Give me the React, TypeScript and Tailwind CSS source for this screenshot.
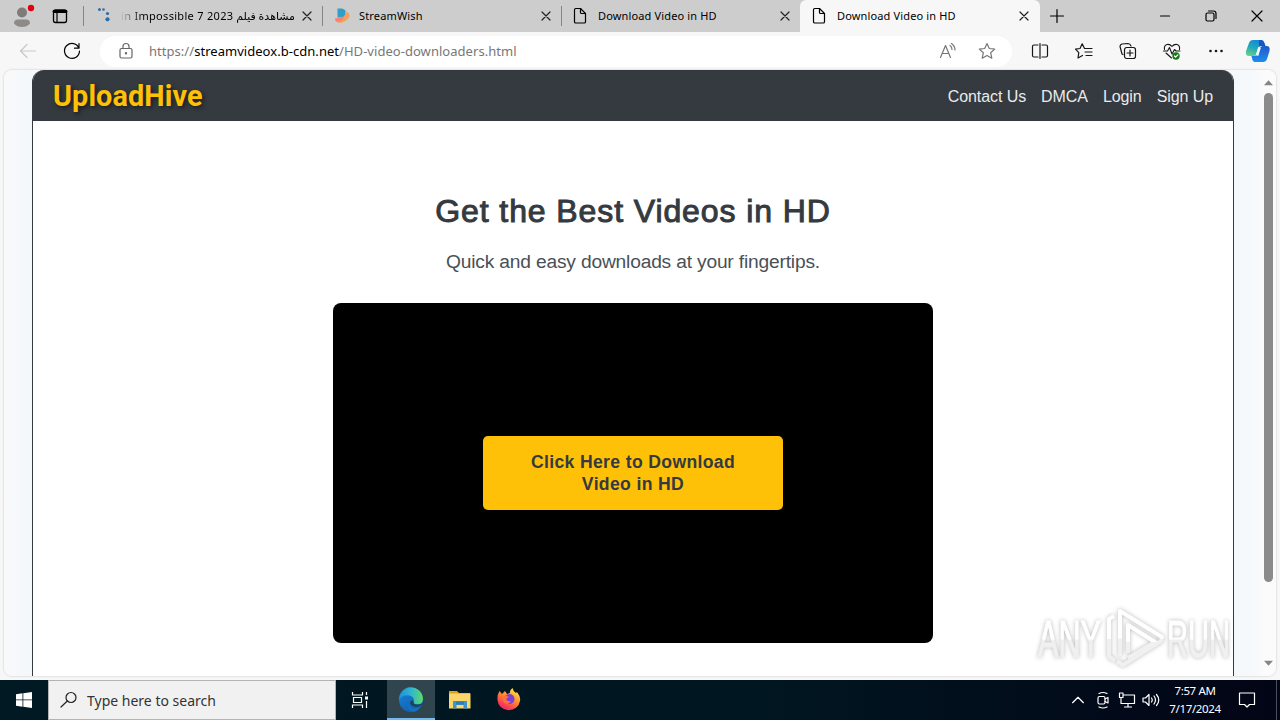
import type { ReactNode } from "react";

interface IconProps {
  children: ReactNode;
  className?: string;
  size?: number;
}

function Icon({ children, className = "", size = 20 }: IconProps) {
  return (
    <svg
      className={`shrink-0 ${className}`}
      width={size}
      height={size}
      viewBox="0 0 20 20"
      fill="none"
      stroke="currentColor"
      strokeWidth="1.2"
      strokeLinecap="round"
      strokeLinejoin="round"
    >
      {children}
    </svg>
  );
}

function PageIcon() {
  return (
    <Icon className="-ml-px text-black">
      <path d="M4.5 3.8A1.3 1.3 0 0 1 5.8 2.5H10.500L15.500 7.500V15.700A1.300 1.300 0 0 1 14.200 17H5.800A1.300 1.300 0 0 1 4.500 15.700Z" />
      <path d="M10.500 2.500V6.500A1 1 0 0 0 11.500 7.500H15.500" />
    </Icon>
  );
}

function DotsIcon() {
  return (
    <svg className="ml-0.5" width="20" height="20" viewBox="0 0 20 20" fill="#2d6ea8">
      <circle cx="4.500" cy="3.500" r="1.500" />
      <circle cx="8.500" cy="3.500" r="1.300" />
      <circle cx="12.500" cy="7.500" r="1.600" />
      <circle cx="12.500" cy="13.300" r="2.100" />
    </svg>
  );
}

function StreamIcon() {
  return (
    <svg width="20" height="20" viewBox="0 0 20 20">
      <path d="M5.500 2.500H10Q14 3.500 14.500 7L11 12L5.500 11Z" fill="#2f9fc6" />
      <path d="M13 5Q18.500 7 17.500 11Q14 16 8 17Q3 16 3 13Q9 14 13 9Z" fill="#f5a05f" />
      <path d="M3 12.500Q8 10 12 11Q11 15 6 16Q3 15 3 12.500Z" fill="#f48378" />
    </svg>
  );
}

interface TabProps {
  icon: ReactNode;
  title: string;
  active?: boolean;
  rtl?: boolean;
  last?: boolean;
}

function Tab({ icon, title, active, rtl, last }: TabProps) {
  return (
    <div
      className={`flex h-8 shrink-0 items-center ${
        active ? "-ml-px w-[240px] rounded-t-md bg-[#f7f7f7] pl-[10px]" : "w-[239px] pl-[9px]"
      }`}
    >
      <span className="flex w-[27px] shrink-0">{icon}</span>
      <span
        dir={rtl ? "rtl" : "ltr"}
        className={`w-[175px] overflow-hidden whitespace-nowrap text-start text-[11px] leading-5 text-black ${
          rtl ? "[mask-image:linear-gradient(to_right,transparent,black_22px)]" : "tracking-[0.15px]"
        }`}
      >
        {rtl ? <span className="tracking-[0.3px]">{title}</span> : title}
      </span>
      <Icon size={16} className="ml-1 text-[#222]">
        <path d="M5 5L15 15M15 5L5 15" strokeWidth="1.500" />
      </Icon>
      {!active && !last && <span className="ml-[7px] h-5 w-px bg-[#858585]" />}
    </div>
  );
}

function TabStrip() {
  return (
    <div className="flex h-8 items-center bg-[#cdcdcd]">
      <div className="flex w-[84px] items-center">
        <svg className="ml-[10px]" width="26" height="28" viewBox="0 0 26 28">
          <circle cx="12" cy="10.500" r="5" fill="#7e7b79" />
          <path d="M4 21.500Q4 17.500 8 17.500H16Q20 17.500 20 21.500Q17 25 12 25T4 21.500Z" fill="#8d8a88" />
          <circle cx="21" cy="6" r="3.200" fill="#e3000f" />
        </svg>
        <Icon className="ml-[14px] text-black">
          <rect x="3.500" y="4" width="13" height="12.500" rx="2" strokeWidth="1.300" />
          <path d="M4 5.500H16" strokeWidth="2.800" />
          <path d="M7 7V16" />
        </Icon>
        <span className="ml-[13px] h-5 w-px bg-[#858585]" />
      </div>
      <Tab icon={<DotsIcon />} title="مشاهدة فيلم in Impossible 7 2023" rtl />
      <Tab icon={<StreamIcon />} title="StreamWish" />
      <Tab icon={<PageIcon />} title="Download Video in HD" last />
      <Tab icon={<PageIcon />} title="Download Video in HD" active />
      <Icon className="ml-[7px] text-black">
        <path d="M10 3.500V16.500M3.500 10H16.500" />
      </Icon>
      <div className="ml-auto flex text-black">
        <span className="flex w-[46px] justify-center">
          <Icon><path d="M5.500 10H14.500" /></Icon>
        </span>
        <span className="flex w-[46px] justify-center">
          <Icon>
            <rect x="5" y="7" width="8" height="8" rx="1.500" />
            <path d="M7.500 5H12.500A2.500 2.500 0 0 1 15 7.500V12.500" />
          </Icon>
        </span>
        <span className="flex w-[46px] justify-center">
          <Icon><path d="M5 5L15 15M15 5L5 15" /></Icon>
        </span>
      </div>
    </div>
  );
}

function CopilotIcon() {
  return (
    <svg width="26" height="26" viewBox="0 0 26 26">
      <defs>
        <linearGradient id="cpa" x1="0.6" y1="0" x2="0.2" y2="1">
          <stop offset="0" stopColor="#1587dc" />
          <stop offset="0.500" stopColor="#22a9b8" />
          <stop offset="1" stopColor="#6bd08a" />
        </linearGradient>
        <linearGradient id="cpb" x1="0" y1="0" x2="0" y2="1">
          <stop offset="0" stopColor="#2456c8" />
          <stop offset="1" stopColor="#1a8ff0" />
        </linearGradient>
      </defs>
      <path d="M8 2H16Q18 2 19 5L20 8H17Q14 8 13 11L11 17Q10 18 8 18H4Q0 18 1 13L4 5Q5 2 8 2Z" fill="url(#cpa)" />
      <path d="M14 2H16.500Q18.500 2 19.500 5L20.500 8H17L14 8Z" fill="#1755c4" />
      <path d="M18 8H21.500Q25.500 8 24.500 13L22 21Q21 24 18 24H10Q7.500 24 7 20L6.500 18H9Q12 18 13 15L15 10Q16 8 18 8Z" fill="url(#cpb)" />
      <path d="M14.500 9.500L12 17.500" stroke="#f3fafd" strokeWidth="2.600" />
    </svg>
  );
}

function Toolbar() {
  return (
    <div className="flex h-[38px] items-center bg-[#f7f7f7]">
      <Icon className="ml-[18px] text-[#c9c9c9]">
        <path d="M17.500 10H2.500M9 3.500L2.500 10L9 16.500" />
      </Icon>
      <Icon className="ml-[24px] text-black">
        <path d="M17 7.200A7.500 7.500 0 1 0 17.500 10M17 2.500V7.200H12.500" strokeWidth="1.200" />
      </Icon>
      <div className="ml-[18px] flex h-[31px] w-[912px] items-center rounded-full bg-white pl-4">
        <Icon className="text-[#666]">
          <rect x="4" y="7.500" width="12" height="9.500" rx="1.500" />
          <path d="M7 7.500V5.500A3 3 0 0 1 13 5.500V7.500" />
          <circle cx="10" cy="12.200" r="0.600" fill="currentColor" />
        </Icon>
        <span className="mt-px ml-[13px] whitespace-nowrap text-[13px] tracking-[0.04px] text-[#777]">
          https://<span className="text-black">streamvideox.b-cdn.net</span>/HD-video-downloaders.html
        </span>
        <Icon className="mr-[19px] ml-auto text-[#777]">
          <path d="M2.500 16.500L7.500 4.500L12.500 16.500M4.300 12.500H10.800" />
          <path d="M12 4.500Q14 6 14 8.500M13.500 2.500Q17 5 17 9" />
        </Icon>
        <Icon className="mr-[15px] text-[#777]">
          <path d="M10 2.500L12.300 7.500L17.700 8.100L13.700 11.800L14.800 17.200L10 14.500L5.200 17.200L6.300 11.800L2.300 8.100L7.700 7.500Z" />
        </Icon>
      </div>
      <div className="ml-[18px] flex items-center gap-6 text-[#161616]">
        <Icon>
          <path d="M8 4H4A1.500 1.500 0 0 0 2.500 5.500V14.500A1.500 1.500 0 0 0 4 16H8M12 4H16A1.500 1.500 0 0 1 17.500 5.500V14.500A1.500 1.500 0 0 1 16 16H12M10 2.500V17.500" />
        </Icon>
        <Icon>
          <path d="M12 7.500H10.500L8.200 2.800L6 7.500L1.500 8.200L4.800 11.600L4 17L8.500 14.500M12.500 7.500H18M11 11H18M12 14.500H18" />
        </Icon>
        <Icon>
          <path d="M5 13.500L4 13L2 5.500Q2 3.500 4 3L10 2.500Q12 2.500 13 5" />
          <rect x="6.500" y="6.500" width="11" height="11" rx="2.200" />
          <path d="M12 9V15M9 12H15" />
        </Icon>
        <Icon>
          <path d="M2.500 8.500Q1.800 4.500 5 3.500Q8 3 10 5.500Q12 3 15 3.500Q18.200 4.500 17.500 8.500M1.500 10H5.500L7.500 6.500L10 13L12.500 8.500L14 10H18M4 12L9.500 17" strokeWidth="1.100" />
          <circle cx="14" cy="15" r="3.700" fill="#187818" stroke="none" />
          <path d="M12.500 15L13.600 16.200L15.800 13.800" stroke="white" />
        </Icon>
        <Icon>
          <g fill="currentColor" stroke="none">
            <circle cx="4.500" cy="10" r="1.300" />
            <circle cx="10" cy="10" r="1.300" />
            <circle cx="15.500" cy="10" r="1.300" />
          </g>
        </Icon>
      </div>
      <div className="ml-[19px]">
        <CopilotIcon />
      </div>
    </div>
  );
}

const navLinks = ["Contact Us", "DMCA", "Login", "Sign Up"];

function SiteHeader() {
  return (
    <header className="flex h-[51px] items-center justify-between bg-[#343a40] px-5">
      <div className="pt-0.5 font-[Roboto,sans-serif] text-[28.800px] font-bold tracking-[0.1px] text-[#ffc107] [text-shadow:2px_2px_4px_rgba(0,0,0,0.5)]">
        UploadHive
      </div>
      <nav className="flex gap-[15px] pt-0.5 text-base tracking-[-0.08px] text-[#e9eaeb]">
        {navLinks.map((link) => (
          <a key={link}>{link}</a>
        ))}
      </nav>
    </header>
  );
}

function Watermark() {
  return (
    <svg
      className="absolute right-0 bottom-1 drop-shadow-[0_0_2px_rgba(0,0,0,0.28)]"
      width="200"
      height="66"
      viewBox="0 0 200 66"
    >
      <defs>
        <linearGradient id="wm" x1="0" y1="0" x2="0" y2="1">
          <stop offset="0.500" stopColor="#ffffff" />
          <stop offset="0.520" stopColor="#f0f0f0" />
        </linearGradient>
      </defs>
      <g
        fill="url(#wm)"
        stroke="url(#wm)"
        strokeWidth="1.2"
        fontFamily="Liberation Sans, sans-serif"
        fontSize="52"
      >
        <text x="5" y="51" textLength="63" lengthAdjust="spacingAndGlyphs">ANY</text>
        <text x="134" y="51" textLength="63" lengthAdjust="spacingAndGlyphs">RUN</text>
      </g>
      <g fill="none" stroke="url(#wm)" strokeWidth="4" strokeLinejoin="round">
        <path d="M81 10L76 13V50L82 55" />
        <path d="M87 50V5L129 31L128 35L90 59L84 55" />
        <path d="M95 47V19L122 36L95 52" />
      </g>
    </svg>
  );
}

function Site() {
  return (
    <div className="flex h-[610px] bg-[#f7f7f7] px-1 pb-1">
      <div className="flex min-w-0 flex-1 overflow-hidden rounded-lg bg-[#f6fafd] shadow-[0_0_2px_rgba(0,0,0,0.25)]">
        <div className="h-full w-7 shrink-0 bg-linear-to-r from-[#f9f9f9] to-[#f3f8fc]" />
        <div className="relative w-[1202px] shrink-0 overflow-hidden rounded-t-[12px] border-x border-[#343a40] bg-white font-['Liberation_Sans',Arial,sans-serif]">
          <SiteHeader />
          <main className="flex flex-col items-center pt-[70px] text-[#343a40]">
            <h1 className="text-[32px] leading-10 tracking-[0.9px] [-webkit-text-stroke:1px_#343a40]">
              Get the Best Videos in HD
            </h1>
            <p className="mt-[19px] text-[19.200px] leading-6 tracking-[-0.18px] text-[#495057]">
              Quick and easy downloads at your fingertips.
            </p>
            <div className="mt-[29px] flex h-[340px] w-[600px] items-center justify-center rounded-lg bg-black">
              <button className="h-[74px] w-[300px] rounded-[5px] bg-[#ffc107] px-10 text-[17.600px] leading-[22px] font-bold tracking-[0.35px]">
                Click Here to Download Video in HD
              </button>
            </div>
          </main>
          <Watermark />
        </div>
        <div className="flex-1 bg-linear-to-r from-[#f3f8fc] to-[#f8fafb]" />
        <div className="flex w-[15px] flex-col items-center bg-[#fbfbfb] pt-[10px] pb-[10px]">
          <svg width="9" height="6" viewBox="0 0 10 6"><path d="M5 0L10 5.500H0Z" fill="#858585" /></svg>
          <div className="mt-[7px] h-[489px] w-[9px] rounded-full bg-[#8b8b8b]" />
          <svg className="mt-auto" width="9" height="6" viewBox="0 0 10 6"><path d="M0 0.500H10L5 6Z" fill="#858585" /></svg>
        </div>
      </div>
    </div>
  );
}

function EdgeIcon() {
  return (
    <svg width="26" height="26" viewBox="0 0 26 26">
      <defs>
        <linearGradient id="edga" x1="0" y1="0.500" x2="1" y2="0.500">
          <stop offset="0" stopColor="#1d8fdc" />
          <stop offset="0.500" stopColor="#2fb6d0" />
          <stop offset="1" stopColor="#5fd968" />
        </linearGradient>
        <linearGradient id="edgb" x1="0" y1="0" x2="0.600" y2="1">
          <stop offset="0" stopColor="#1b84d6" />
          <stop offset="1" stopColor="#0f62b4" />
        </linearGradient>
      </defs>
      <circle cx="13" cy="13" r="12" fill="url(#edgb)" />
      <path d="M1 13A12 12 0 0 1 25 11.500Q25 17.500 19 17.500Q14.500 17.500 15.500 15Q17 10 11.500 8.500Q5 7 1 13Z" fill="url(#edga)" />
      <path d="M9.500 14Q9 20 14.500 21.500Q19.500 22.500 23 19Q20 24 15.500 24.800Q8 22 9.500 14Z" fill="#1673c4" />
      <path d="M15.500 13.500Q12 13 12 15.500Q12.500 19.500 18 20Q22 20 26 16.500V15Q24.500 17.500 19 17.500Q15 17.500 15.500 13.500Z" fill="#1f4459" />
    </svg>
  );
}

function ExplorerIcon() {
  return (
    <svg width="24" height="24" viewBox="0 0 24 24">
      <path d="M1 3H9L11 5H22V10H1Z" fill="#e2a01c" />
      <path d="M1 5.500H22.500V20.500H1Z" fill="#fbd76b" />
      <path d="M5 20.500V13H19V20.500H15.500V17H8.500V20.500Z" fill="#3e94cc" />
      <path d="M8 13.500H16V16.500H8Z" fill="#2b7eb6" />
    </svg>
  );
}

function FirefoxIcon() {
  return (
    <svg width="26" height="26" viewBox="0 0 26 26">
      <defs>
        <linearGradient id="ffx" x1="0.8" y1="0" x2="0.2" y2="1">
          <stop offset="0" stopColor="#fff04a" />
          <stop offset="0.450" stopColor="#ff8a2c" />
          <stop offset="0.850" stopColor="#f5315d" />
        </linearGradient>
      </defs>
      <path d="M3.500 4L6 7L9 4L11 7L14 6Q13 4 16.500 1Q17 4 20 6L21 5Q25 10 24 14A11.300 10.500 0 0 1 1.500 13Q1 8 3.500 4Z" fill="url(#ffx)" />
      <circle cx="13.500" cy="12" r="5" fill="#7c40d2" />
      <path d="M7 10Q10 8 13 10L10 12Q11 15 15 14Q13 18 9 16Q6 14 7 10Z" fill="#ff7040" />
    </svg>
  );
}

function Taskbar() {
  return (
    <div className="flex h-10 items-center bg-linear-to-r from-[#001923] via-[#001620] via-60% to-[#020516] text-white">
      <div className="flex w-12 justify-center">
        <svg width="16" height="16" viewBox="0 0 16 16" fill="white">
          <path d="M0 2.200L6.500 1.300V7.500H0ZM7.300 1.200L16 0V7.500H7.300ZM0 8.300H6.500V14.700L0 13.800ZM7.300 8.300H16V16L7.300 14.800Z" />
        </svg>
      </div>
      <div className="flex h-10 w-72 items-center border border-[#b4b4b4] bg-[#f1f1f1] text-[#333]">
        <Icon className="ml-[10px] text-[#222]">
          <circle cx="12" cy="7.500" r="5" />
          <path d="M8.300 11L2 17" />
        </Icon>
        <span className="ml-2 text-[14px]">Type here to search</span>
      </div>
      <div className="flex w-[51px] justify-center pr-[3px]">
        <svg width="18" height="18" viewBox="0 0 18 18" fill="none" stroke="white" strokeWidth="1.200">
          <path d="M1.500 1V4H11.500V1M1.500 17V14H11.500V17M2.500 6.500H10.500V11.500H2.500ZM15.500 1V4M15.500 10V17" />
          <path d="M14 5.500H17V8.500H14Z" fill="white" stroke="none" />
        </svg>
      </div>
      <div className="flex h-10 w-12 items-center justify-center border-b-2 border-[#76b9ed] bg-[#30454e] pt-0.5">
        <EdgeIcon />
      </div>
      <div className="flex w-[49px] justify-center"><ExplorerIcon /></div>
      <div className="flex w-[49px] justify-center"><FirefoxIcon /></div>
      <div className="ml-auto flex items-center">
        <Icon size={18}><path d="M4 13L10 7L16 13" strokeWidth="1.400" /></Icon>
        <Icon className="ml-[6px]">
          <rect x="5" y="6.500" width="7" height="7.500" rx="1.500" />
          <path d="M12 9L15 7.500V13L12 11.500M6 3.500Q10 1.500 14 3.500M6 17Q10 19 14 17" />
        </Icon>
        <Icon className="ml-1">
          <path d="M7 5H17.500V13.500H4V9M11 13.500V17M7.500 17H14.500M2.500 3H6V7.500H2.500ZM4 7.500V10" />
        </Icon>
        <Icon className="ml-1">
          <path d="M2 8H4.500L8 4.500V15.500L4.500 12H2ZM10.500 8Q12 10 10.500 12M13 6Q16 10 13 14M15.500 4.500Q20 10 15.500 15.500" />
        </Icon>
        <div className="ml-[5px] w-[58px] text-center text-[11.500px] leading-[18px] tracking-[-0.35px] whitespace-nowrap">
          <div>7:57 AM</div>
          <div>7/17/2024</div>
        </div>
        <Icon className="mr-[19px] ml-[13px]">
          <path d="M2.500 3H17.500V14.500H12.500L10 17L7.500 14.500H2.500Z" />
        </Icon>
        <span className="mr-[3px] h-10 w-px bg-[#4b4e5b]" />
      </div>
    </div>
  );
}

export default function App() {
  return (
    <div className="h-[720px] w-[1280px] overflow-hidden bg-[#f7f7f7] font-['Noto_Sans','Open_Sans','DejaVu_Sans',sans-serif]">
      <TabStrip />
      <Toolbar />
      <Site />
      <Taskbar />
    </div>
  );
}
